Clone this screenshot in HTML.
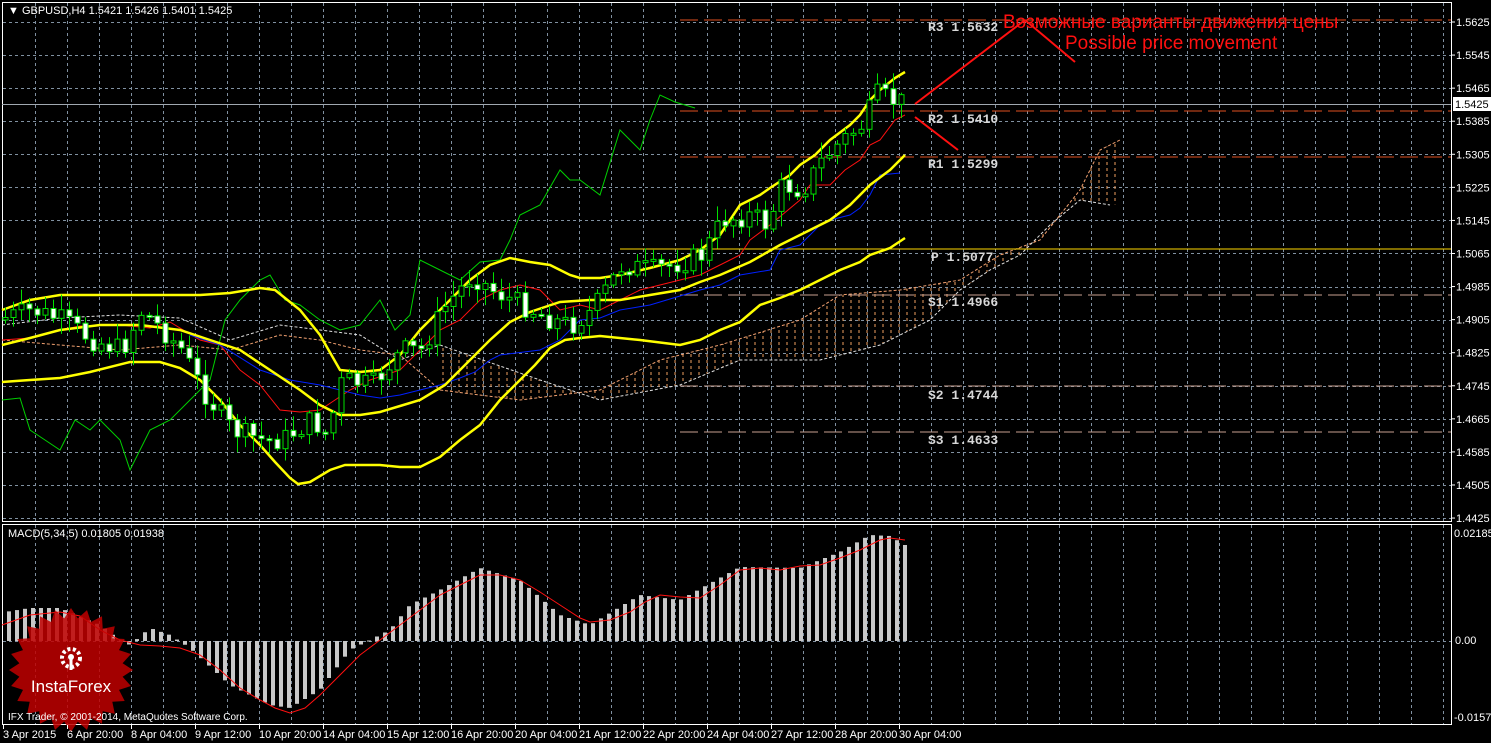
<!DOCTYPE html>
<html><head><meta charset="utf-8"><style>
html,body{margin:0;padding:0;background:#000;width:1491px;height:743px;overflow:hidden}
svg{display:block}
text{font-family:"Liberation Sans",sans-serif}
.ax{fill:#fff;font-size:11px}
.pv{fill:#d8d8d8;font-family:"Liberation Mono",monospace;font-size:13px;font-weight:bold}
</style></head><body>
<svg id="s" width="1491" height="743" xmlns="http://www.w3.org/2000/svg">
<defs>
<pattern id="hatch" width="8" height="6" patternUnits="userSpaceOnUse">
<line x1="3" y1="0" x2="3" y2="3" stroke="#f0a060" stroke-width="1"/>
</pattern>
</defs>
<rect width="1491" height="743" fill="#000"/>
<g id="grid" stroke="#8090a0" stroke-dasharray="3,3" stroke-width="1"></g>
<rect x="2.5" y="2.5" width="1449" height="519" fill="none" stroke="#fff"/>
<rect x="2.5" y="524.5" width="1449" height="200" fill="none" stroke="#fff"/>
<text x="8" y="14" class="ax">▼ GBPUSD,H4  1.5421 1.5426 1.5401 1.5425</text>
<polygon fill="url(#hatch)" points="440,390 520,400 600,390 660,360 720,345 800,320 840,295 900,290 960,280 1000,255 1040,240 1080,190 1100,150 1120,140 1120,205 1080,200 1050,225 1020,255 990,270 960,290 930,320 880,345 820,360 740,360 680,385 600,400 540,380 440,345"/>
<polyline fill="none" stroke="#f0a070" stroke-dasharray="3,2" points="440,390 520,400 600,390 660,360 720,345 800,320 840,295 900,290 960,280 1000,255 1040,240 1080,190 1100,150 1120,140"/>
<polyline fill="none" stroke="#e0e0e0" stroke-dasharray="3,2" points="440,345 540,380 600,400 680,385 740,360 820,360 880,345 930,320 960,290 990,270 1020,255 1050,225 1080,200 1110,205"/>
<polyline fill="none" stroke="#e0e0e0" stroke-dasharray="3,2" points="2,325 60,318 120,315 180,318 230,340 280,325 320,330 360,335 400,360 440,345"/>
<polyline fill="none" stroke="#f0a070" stroke-dasharray="3,2" points="2,340 60,345 120,350 180,345 230,350 280,335 320,340 360,350 400,355 440,390"/>
<line x1="680" y1="20" x2="1451" y2="20" stroke="#e05020" stroke-dasharray="18,6"/>
<line x1="680" y1="111" x2="1451" y2="111" stroke="#e05020" stroke-dasharray="18,6"/>
<line x1="680" y1="157" x2="1451" y2="157" stroke="#e05020" stroke-dasharray="18,6"/>
<line x1="620" y1="249" x2="1451" y2="249" stroke="#ffd700"/>
<line x1="680" y1="295" x2="1451" y2="295" stroke="#c8a090" stroke-dasharray="18,6"/>
<line x1="680" y1="386" x2="1451" y2="386" stroke="#c8a090" stroke-dasharray="18,6"/>
<line x1="680" y1="432" x2="1451" y2="432" stroke="#c8a090" stroke-dasharray="18,6"/>
<line x1="2" y1="104.5" x2="1451" y2="104.5" stroke="#a0a8b0"/>
<text x="928" y="31" class="pv">R3 1.5632</text>
<text x="928" y="123" class="pv">R2 1.5410</text>
<text x="928" y="168" class="pv">R1 1.5299</text>
<text x="931" y="261" class="pv">P 1.5077</text>
<text x="928" y="306" class="pv">S1 1.4966</text>
<text x="928" y="399" class="pv">S2 1.4744</text>
<text x="928" y="444" class="pv">S3 1.4633</text>
<polyline fill="none" stroke="#00d000" points="2,400 20,398 30,430 45,440 60,450 75,420 90,430 100,420 120,440 130,470 150,430 170,420 190,400 210,380 225,320 240,300 260,280 270,275 285,300 300,305 320,320 340,330 360,325 380,300 395,330 410,315 420,260 440,270 460,280 480,262 500,260 510,240 520,215 540,205 560,170 570,180 580,180 600,195 620,130 630,140 640,150 650,120 660,95 675,102 695,108"/>
<polyline fill="none" stroke="#ff1010" points="2,340 30,338 60,330 80,326 120,325 150,328 170,322 200,340 220,345 240,370 260,385 280,410 300,412 320,410 335,400 350,390 370,380 400,370 420,350 440,330 460,320 480,300 500,290 520,285 540,290 560,310 580,305 600,310 620,300 640,290 660,285 680,280 700,275 720,265 740,255 750,240 770,225 800,200 810,185 830,185 845,170 860,160 870,145 880,140 895,120 905,115"/>
<polyline fill="none" stroke="#0020ff" points="190,335 220,345 260,370 290,380 320,385 360,395 380,398 400,395 420,390 440,385 460,378 475,372 490,360 500,355 540,350 560,340 580,320 600,318 620,310 650,305 700,290 720,285 740,275 770,270 780,250 800,245 820,225 830,220 850,215 860,208 870,195 880,175 900,173"/>
<g fill="none" stroke="#ffff00" stroke-width="2.5">
<polyline points="2,310 30,300 60,295 100,295 150,295 200,295 230,293 260,288 275,290 300,310 320,335 340,370 360,372 380,370 400,355 420,330 440,310 470,280 490,265 510,258 530,262 550,265 570,275 580,278 600,278 620,275 650,268 680,260 700,250 720,235 740,205 760,195 770,188 790,175 800,165 815,155 830,140 850,125 860,115 870,100 880,90 895,78 905,72"/>
<polyline points="2,345 30,338 60,330 100,325 140,325 180,330 210,340 240,350 270,370 300,390 320,405 340,415 360,415 380,412 400,406 420,400 445,385 470,360 490,340 510,322 530,312 560,302 590,300 620,300 650,295 680,290 700,282 720,275 750,262 780,245 800,235 830,220 850,205 870,185 890,170 905,155"/>
<polyline points="2,382 30,380 60,378 90,372 130,362 160,362 180,368 200,380 220,400 240,425 260,445 275,462 290,478 298,484 310,482 330,470 345,465 380,465 400,467 420,467 440,457 460,440 480,425 500,400 520,380 535,365 550,348 565,340 580,338 600,336 640,340 680,345 700,340 720,330 740,322 760,305 780,298 800,290 820,280 840,270 860,262 870,255 890,248 905,238"/>
</g>
<g id="candles"></g>
<g stroke="#ff1010" stroke-width="2" fill="none">
<line x1="915" y1="104" x2="1025" y2="20"/>
<line x1="1025" y1="20" x2="1075" y2="62"/>
<line x1="915" y1="117" x2="958" y2="150"/>
</g>
<text x="1003" y="28" fill="#ff1010" font-size="19">Возможные варианты движения цены</text>
<text x="1065" y="49" fill="#ff1010" font-size="19">Possible price movement</text>
<g id="pax" class="ax"></g>
<rect x="1453" y="97" width="38" height="14" fill="#fff"/>
<text x="1455" y="108" fill="#000" font-size="11">1.5425</text>
<text x="8" y="537" class="ax" font-size="10">MACD(5,34,5) 0.01805 0.01938</text>
<g id="macd"></g>
<polyline fill="none" stroke="#ff1010" points="2,625 30,615 60,612 80,616 100,630 120,640 140,645 160,646 180,648 200,655 220,670 240,688 260,700 275,708 290,713 305,708 320,695 340,675 360,655 380,640 400,625 420,610 440,595 460,585 480,575 500,575 520,580 540,592 560,605 580,618 590,622 610,620 630,612 645,602 660,595 680,597 700,598 720,585 740,570 760,568 780,570 800,566 820,565 840,558 860,550 880,540 890,538 905,540"/>
<text x="1454" y="537" class="ax" font-size="10">0.02185</text>
<text x="1455" y="644" class="ax" font-size="10">0.00</text>
<text x="1454" y="721" class="ax" font-size="10">-0.01579</text>
<g opacity="0.85"><polygon id="star" fill="#c00000"/></g>
<g fill="#fff" transform="translate(71,658)">
<circle r="9" fill="none" stroke="#fff" stroke-width="4" stroke-dasharray="3,2.5"/>
<circle r="3" cy="-1"/>
<rect x="-1.5" y="0" width="3" height="12"/>
</g>
<text x="71" y="692" fill="#fff" font-size="17" text-anchor="middle">InstaForex</text>
<text x="8" y="720" fill="#fff" font-size="10">IFX Trader, © 2001-2014, MetaQuotes Software Corp.</text>
<g id="tax" class="ax"></g>
</svg>
<script>
(function(){
var NS="http://www.w3.org/2000/svg";
function el(t,a,p){var e=document.createElementNS(NS,t);for(var k in a)e.setAttribute(k,a[k]);(p||document.getElementById('s')).appendChild(e);return e;}
var g=document.getElementById('grid');
for(var x=35;x<1451;x+=32){el('line',{x1:x+.5,y1:3,x2:x+.5,y2:724},g);}
for(var i=1;i<=15;i++){var y=22+i*33.07;el('line',{x1:3,y1:Math.round(y)+.5,x2:1451,y2:Math.round(y)+.5},g);}
el('line',{x1:3,y1:22.5,x2:1451,y2:22.5},g);
el('line',{x1:3,y1:641.5,x2:1451,y2:641.5},g);
var pax=document.getElementById('pax');
for(var i=0;i<=15;i++){var p=(1.5625-i*0.008).toFixed(4);var y=22+i*33.07;el('line',{x1:1451,y1:y,x2:1455,y2:y,stroke:'#fff'});if(Math.abs(y-104)<8)continue;var t=el('text',{x:1456,y:y+4},pax);t.textContent=p;}
var path=[[5,320],[40,310],[70,320],[100,340],[130,350],[150,310],[170,330],[190,350],[210,390],[240,430],[270,440],[290,440],[320,420],[335,435],[350,380],[380,385],[410,350],[430,350],[450,310],[480,275],[500,290],[520,300],[560,320],[580,325],[600,310],[630,265],[660,270],[690,262],[710,255],[730,220],[760,215],[775,225],[790,185],[810,190],[830,160],[850,140],[870,125],[885,95],[905,102]];
function interp(pts,x){for(var i=0;i<pts.length-1;i++){if(x>=pts[i][0]&&x<=pts[i+1][0]){var a=pts[i],b=pts[i+1];return a[1]+(b[1]-a[1])*(x-a[0])/(b[0]-a[0]);}}return pts[pts.length-1][1];}
var seed=7;function rnd(){seed=(seed*9301+49297)%233280;return seed/233280;}
var cg=document.getElementById('candles');
var prev=interp(path,5);
for(var x=5;x<=901;x+=8){var c=interp(path,x+8)+(rnd()-0.5)*22;var o=prev;var tp=Math.min(o,c),bt=Math.max(o,c);if(bt-tp<2)bt=tp+2;
el('line',{x1:x+.5,y1:tp-2-rnd()*14,x2:x+.5,y2:bt+2+rnd()*14,stroke:'#00e000'},cg);
el('rect',{x:x-2,y:tp,width:5,height:bt-tp,fill:c>o?'#fff':'#000',stroke:'#00e000'},cg);prev=c;}
var mh=[[5,612],[30,608],[60,608],[100,625],[120,640],[130,645],[150,628],[170,635],[190,648],[230,685],[270,705],[290,708],[320,690],[350,650],[370,640],[390,630],[410,605],[440,590],[480,568],[520,580],[560,615],[590,625],[640,595],[680,600],[720,578],[740,567],[800,568],[840,552],[870,535],[890,536],[905,545]];
var mg=document.getElementById('macd');
for(var x=9;x<=905;x+=8){var y=interp(mh,x);el('rect',{x:x-2,y:Math.min(y,641),width:4,height:Math.max(1,Math.abs(641-y)),fill:'#c8c8c8'},mg);}
var pts=[];for(var i=0;i<48;i++){var r=i%2?52:62;var a=i*Math.PI/24;pts.push((71+r*Math.cos(a)).toFixed(1)+','+(670+r*Math.sin(a)).toFixed(1));}
document.getElementById('star').setAttribute('points',pts.join(' '));
var labs=["3 Apr 2015","6 Apr 20:00","8 Apr 04:00","9 Apr 12:00","10 Apr 20:00","14 Apr 04:00","15 Apr 12:00","16 Apr 20:00","20 Apr 04:00","21 Apr 12:00","22 Apr 20:00","24 Apr 04:00","27 Apr 12:00","28 Apr 20:00","30 Apr 04:00"];
var ta=document.getElementById('tax');
for(var i=0;i<labs.length;i++){var x=3+i*64;el('line',{x1:x+.5,y1:725,x2:x+.5,y2:729,stroke:'#fff'});var t=el('text',{x:x,y:738},ta);t.textContent=labs[i];}
})();
</script>
</body></html>
